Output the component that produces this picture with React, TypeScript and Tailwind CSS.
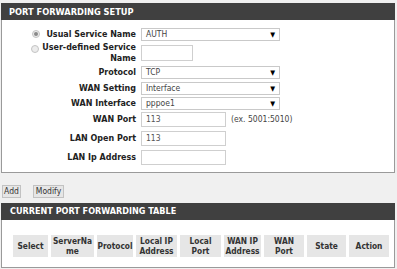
import React from "react";

const FONT = { fontFamily: "'DejaVu Sans Condensed', 'DejaVu Sans', sans-serif" };

function Radio({ checked }: { checked?: boolean }) {
  return (
    <span className="inline-flex h-[8px] w-[8px] items-center justify-center rounded-full border border-[#c4c4c4] bg-[#ececec]">
      {checked && <span className="h-[4px] w-[4px] rounded-full bg-[#8a8a8a]" />}
    </span>
  );
}

function Select({ value }: { value: string }) {
  return (
    <div className="relative flex h-[13px] w-[139px] items-center border border-[#c9c9c9] bg-white pl-[4px] text-[8.5px] text-[#444]">
      {value}
      <span className="absolute right-[4px] top-[1px] text-[7px] leading-[10px] text-black">▼</span>
    </div>
  );
}

function Input({ value, w, h = 15 }: { value?: string; w: number; h?: number }) {
  return (
    <div
      className="flex items-center border border-[#cfcfcf] bg-white pl-[4px] text-[8.5px] text-[#555]"
      style={{ width: w, height: h }}
    >
      {value}
    </div>
  );
}

function Row({ h, label, children }: { h: number; label: React.ReactNode; children: React.ReactNode }) {
  return (
    <div className="flex items-center" style={{ height: h }}>
      <div className="w-[134px] text-right text-[8.9px] font-bold leading-[11px] text-[#222]">{label}</div>
      <div className="ml-[5px] flex items-center">{children}</div>
    </div>
  );
}

const cols: [React.ReactNode, number, string][] = [
  ["Select", 35, "a"],
  [<>ServerNa<br />me</>, 43, "b"],
  ["Protocol", 36, "c"],
  [<>Local IP<br />Address</>, 41, "d"],
  [<>Local<br />Port</>, 41, "e"],
  [<>WAN IP<br />Address</>, 37, "f"],
  [<>WAN<br />Port</>, 40, "g"],
  ["State", 39, "h"],
  ["Action", 40, "i"],
];

export default function App() {
  return (
    <div className="min-h-[269px] w-[397px] bg-[#f0f0f0] pt-[3px]" style={FONT}>
      <div className="ml-[1px] w-[394px] border-x border-b border-[#9a9a9a] bg-white">
        <div className="-mx-[1px] flex h-[17px] items-center bg-[#404040] pl-[8px] text-[9.2px] font-bold text-white">
          PORT FORWARDING SETUP
        </div>
        <div className="flex flex-col pb-[6px] pt-[6px]">
          <Row
            h={16}
            label={
              <span className="inline-flex items-center">
                <Radio checked />
                <span className="ml-[6px]">Usual Service Name</span>
              </span>
            }
          >
            <Select value="AUTH" />
          </Row>
          <Row
            h={22}
            label={
              <div className="relative">
                <span className="absolute left-[29px] top-[3px] flex">
                  <Radio />
                </span>
                User-defined Service
                <br />
                Name
              </div>
            }
          >
            <Input w={52} h={16} />
          </Row>
          <Row h={17} label="Protocol">
            <Select value="TCP" />
          </Row>
          <Row h={15} label="WAN Setting">
            <Select value="Interface" />
          </Row>
          <Row h={15} label="WAN Interface">
            <Select value="pppoe1" />
          </Row>
          <Row h={17} label="WAN Port">
            <Input w={85} value="113" />
            <span className="ml-[5px] text-[8.5px] text-[#444]">(ex. 5001:5010)</span>
          </Row>
          <Row h={20} label="LAN Open Port">
            <Input w={85} value="113" />
          </Row>
          <Row h={18} label="LAN Ip Address">
            <Input w={85} />
          </Row>
        </div>
      </div>

      <div className="mt-[12px] flex items-center pl-[2px]">
        <button className="h-[13px] w-[19px] border border-[#c2c2c2] bg-[#e6e6e6] text-[8.5px] leading-[11px] text-[#333]">
          Add
        </button>
        <button className="ml-[12px] h-[13px] w-[31px] border border-[#c2c2c2] bg-[#e6e6e6] text-[8.5px] leading-[11px] text-[#333]">
          Modify
        </button>
      </div>

      <div className="ml-[1px] mt-[5px] w-[394px] border-x border-b border-[#9a9a9a] bg-white">
        <div className="-mx-[1px] flex h-[17px] items-center bg-[#404040] pl-[9px] text-[9px] font-bold text-white">
          CURRENT PORT FORWARDING TABLE
        </div>
        <div className="flex gap-[3px] pb-[10px] pl-[11px] pt-[15px]">
          {cols.map(([t, w, k]) => (
            <div
              key={k}
              className="flex h-[22px] items-center justify-center bg-[#e6e6e6] text-center text-[8.3px] font-bold leading-[10px] text-[#333]"
              style={{ width: w }}
            >
              <div>{t}</div>
            </div>
          ))}
        </div>
      </div>
    </div>
  );
}
